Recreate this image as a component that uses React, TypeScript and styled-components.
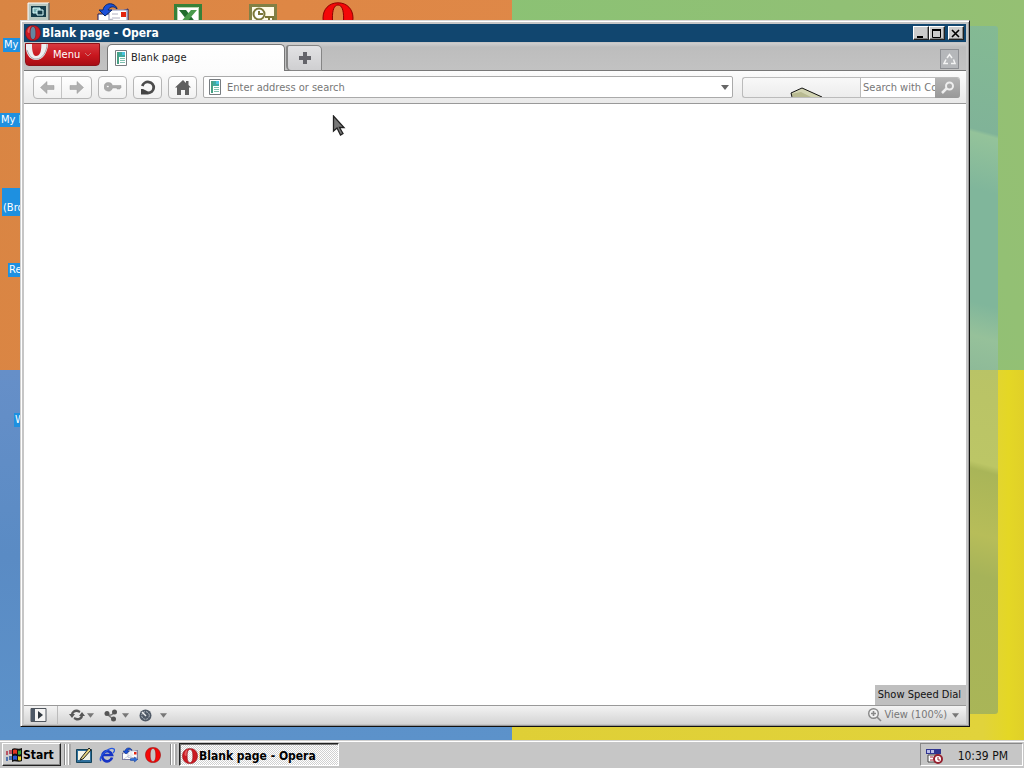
import React from "react";
import styled, { createGlobalStyle, css } from "styled-components";

const Global = createGlobalStyle`
  * { box-sizing: border-box; }
  body { margin: 0; font-family: "DejaVu Sans Condensed", "DejaVu Sans", sans-serif; font-size: 11px; line-height: 14px; color: #222; }
  button, input { font: inherit; color: inherit; margin: 0; padding: 0; border-radius: 0; }
  svg { display: block; flex: none; }
`;

const Screen = styled.div`
  display: flex;
  flex-direction: column;
  height: 100vh;
  min-height: 400px;
  overflow: hidden;
`;

const Desktop = styled.main`
  position: relative;
  flex: 1;
  min-height: 0;
  overflow: hidden;
`;

const Wallpaper = styled.div`
  display: grid;
  grid-template: 1fr 1fr / 1fr 1fr;
  height: 100%;
`;

const Quarter = styled.div<{ $fill: string }>`
  background: ${(p) => p.$fill};
`;

const WallpaperPane = styled.div`
  position: absolute;
  top: 26px;
  right: 26px;
  bottom: 26px;
  width: 120px;
  border-radius: 3px;
  display: grid;
  grid-template-rows: 344fr 344fr;
  overflow: hidden;
`;

const Shortcuts = styled.div`
  position: absolute;
  top: 2px;
  left: 0;
  display: flex;
`;

const Shortcut = styled.div`
  width: 75px;
  height: 32px;
  display: flex;
  justify-content: center;
`;

const Labels = styled.div`
  position: absolute;
  top: 38px;
  left: 0;
  width: 21px;
  overflow: hidden;
  display: grid;
  grid-template-rows: 75px 75px 75px 150px 20px;
  color: #fff;
  white-space: nowrap;
`;

const Label = styled.span<{ $indent: number; $tall?: boolean }>`
  margin-left: ${(p) => p.$indent}px;
  height: ${(p) => (p.$tall ? 28 : 14)}px;
  padding: ${(p) => (p.$tall ? "13px" : "0")} 1px 0;
  background: #1e90e0;
`;

const Window = styled.section`
  position: absolute;
  inset: 20px 54px 13px 20px;
  display: flex;
  flex-direction: column;
  padding: 2px;
  background: #c6c6c6;
  border: 1px solid;
  border-color: #d8d8d8 #111 #111 #d0d0d0;
  box-shadow: inset 1px 1px #fff, inset -1px -1px #999;
`;

const TitleBar = styled.header`
  display: flex;
  align-items: center;
  gap: 1px;
  height: 18px;
  margin: 1px 1px 1px 1px;
  padding: 0 2px 0 1px;
  background: #11466f;
  color: #fff;
`;

const Title = styled.h1`
  flex: 1;
  margin: 0;
  font-size: 12px;
  line-height: 18px;
  font-weight: bold;
`;

const raised = css`
  background: #ccc;
  border: 1px solid;
  border-color: #fff #222 #222 #fff;
  box-shadow: inset -1px -1px #888;
`;

const Caption = styled.button<{ $gap?: boolean }>`
  ${raised}
  width: 16px;
  height: 14px;
  margin-left: ${(p) => (p.$gap ? 2 : -1)}px;
  display: grid;
  place-items: center;
  color: #000;
`;

const TabBar = styled.nav`
  display: flex;
  align-items: flex-start;
  height: 28px;
  margin: 0 1px;
  border-bottom: 1px solid #777;
  background: linear-gradient(#cfcfcf, #bdbdbd 4px, #c2c2c2);
`;

const MenuButton = styled.button`
  display: flex;
  align-items: center;
  gap: 4px;
  width: 75px;
  height: 23px;
  margin: 0 7px 0 1px;
  padding: 0 5px 0 0;
  border: 1px solid #8e1118;
  border-radius: 0 0 4px 4px;
  background: linear-gradient(#d73a40, #c8161e 55%, #a80d14);
  color: #fff;
  overflow: hidden;
`;

const Tab = styled.button`
  display: flex;
  align-items: center;
  gap: 4px;
  width: 178px;
  height: 27px;
  margin-top: 1px;
  padding: 0 7px;
  border: 1px solid #777;
  border-bottom: 0;
  border-radius: 5px 5px 0 0;
  background: linear-gradient(#fff, #fcfcfc);
  color: #222;
`;

const NewTab = styled.button`
  display: grid;
  place-items: center;
  width: 36px;
  height: 26px;
  margin: 2px 0 0 1px;
  border: 1px solid #858585;
  border-left-width: 2px;
  border-radius: 3px 5px 0 5px;
  background: linear-gradient(#e2e2e4, #cfcfd1);
`;

const ClosedTabs = styled.button`
  display: grid;
  place-items: center;
  width: 19px;
  height: 20px;
  margin: 6px 7px 0 auto;
  border: 1px solid #8d8f93;
  background: #b5b7ba;
`;

const ToolBar = styled.div`
  display: flex;
  align-items: center;
  gap: 6px;
  height: 33px;
  margin: 0 1px;
  padding: 0 6px 0 9px;
  border-bottom: 1px solid #999;
  background: linear-gradient(#fcfcfc, #e9e9e9);
`;

const ButtonGroup = styled.div`
  display: flex;
  height: 23px;
  border: 1px solid #b6b6b6;
  border-radius: 4px;
  background: linear-gradient(#fff, #f1f1f1);
`;

const ToolButton = styled.button`
  display: grid;
  place-items: center;
  width: 27px;
  border: 0;
  background: none;
  & + & { width: 30px; border-left: 1px solid #c4c4c4; }
`;

const Address = styled.div`
  display: flex;
  align-items: center;
  flex: 1;
  gap: 6px;
  height: 22px;
  padding: 0 3px 0 5px;
  border: 1px solid #aaa;
  border-radius: 2px;
  background: #fff;
`;

const Field = styled.input`
  flex: 1;
  min-width: 0;
  height: 20px;
  border: 0;
  outline: 0;
  background: #fff;
  color: #777;
  &::placeholder { color: #777; opacity: 1; }
`;

const PlainButton = styled.button`
  display: flex;
  align-items: center;
  border: 0;
  background: none;
`;

const Search = styled.div`
  display: flex;
  width: 218px;
  height: 21px;
  margin-left: 3px;
  border: 1px solid #bbb;
  border-right: 0;
  border-radius: 3px;
`;

const Provider = styled.div`
  display: flex;
  align-items: flex-end;
  justify-content: center;
  width: 118px;
  padding-left: 9px;
  border-right: 1px solid #bbb;
`;

const SearchField = styled(Field)`
  height: 19px;
  padding-left: 2px;
`;

const SearchButton = styled.button`
  display: grid;
  place-items: center;
  width: 25px;
  height: 20px;
  border: 0;
  border-radius: 0 3px 3px 0;
  background: linear-gradient(#b4b4b4, #989898);
`;

const Page = styled.article`
  display: flex;
  align-items: flex-end;
  justify-content: flex-end;
  flex: 1;
  min-height: 0;
  margin: 0 1px;
  background: #fff;
`;

const Hint = styled.div`
  height: 20px;
  padding: 3px 5px 3px 3px;
  background: #bfbfbf;
  color: #111;
`;

const StatusBar = styled.footer`
  display: flex;
  align-items: center;
  height: 19px;
  margin: 0 1px;
  padding: 0 7px 0 6px;
  border-top: 1px solid #999;
  background: linear-gradient(#f3f3f3, #d4d4d4);
`;

const PanelToggle = styled.div`
  display: flex;
  align-items: center;
  height: 100%;
  width: 28px;
  margin-right: 11px;
  border-right: 1px solid #bbb;
`;

const StatusButton = styled(PlainButton)`
  gap: 2px;
  margin-right: 10px;
`;

const ViewButton = styled(PlainButton)`
  gap: 2px;
  margin-left: auto;
  color: #777;
  & > svg:last-child { margin-left: 3px; }
`;

const TaskBar = styled.footer`
  display: flex;
  align-items: center;
  flex: none;
  height: 28px;
  padding: 0 1px 0 2px;
  border-top: 1px solid #d0d0d0;
  box-shadow: inset 0 1px #fff;
  background: #c6c6c6;
`;

const Start = styled.button`
  ${raised}
  display: flex;
  align-items: center;
  width: 59px;
  height: 23px;
  padding-left: 3px;
  font-size: 12px;
  font-weight: bold;
  color: #000;
`;

const Grip = styled.div`
  width: 7px;
  height: 21px;
  margin: 0 2px 0 3px;
  border-left: 1px solid #888;
  border-right: 2px solid #aaa;
  box-shadow: inset 1px 0 #fff, inset -1px 0 #fff;
`;

const QuickLaunch = styled.div`
  display: flex;
  gap: 7px;
  margin: 0 6px 0 3px;
`;

const Task = styled.button`
  display: flex;
  align-items: center;
  gap: 1px;
  width: 160px;
  height: 23px;
  padding: 2px 3px 0 2px;
  border: 1px solid;
  border-color: #222 #fff #fff #222;
  box-shadow: inset 1px 1px #777;
  background: repeating-conic-gradient(#fff 0 25%, #d0d0d0 0 50%) 0 0 / 2px 2px;
  font-size: 12px;
  font-weight: bold;
  color: #000;
`;

const Tray = styled.div`
  display: flex;
  align-items: center;
  justify-content: space-between;
  width: 103px;
  height: 23px;
  margin-left: auto;
  padding: 2px 14px 0 4px;
  border: 1px solid;
  border-color: #888 #fff #fff #888;
  font-size: 12px;
  color: #111;
`;

const Pointer = styled.svg`
  position: absolute;
  left: 332px;
  top: 115px;
`;

function OperaIcon({ size = 16, flat = false }: { size?: number; flat?: boolean }) {
  return (
    <svg width={size} height={size} viewBox="0 0 16 16">
      {!flat && <ellipse cx="8" cy="8" rx="3.500" ry="6.800" fill="#fff" opacity=".35" />}
      <path fillRule="evenodd" fill={flat ? "#f40808" : "#cc1a22"} stroke={flat ? "#8d0000" : "#7c0c12"} strokeWidth="0.5" d="M8 .4C3.400.4.5 3.700.5 8s2.900 7.600 7.500 7.600 7.500-3.300 7.500-7.600S12.600.4 8 .4ZM8 1.500c2 0 2.800 2.700 2.800 6.500S10 14.500 8 14.500 5.200 11.800 5.200 8 6 1.500 8 1.500Z" />
      {!flat && <path d="M3 4c1-2 2-2.500 3-2.700C4.600 3 4.500 6 4.500 8 3 8 1.800 7 3 4Z" fill="#ef7a7c" opacity=".7" />}
    </svg>
  );
}

function PageIcon() {
  return (
    <svg width="12" height="16" viewBox="0 0 12 16">
      <path d="M.5.5h11v15H.5z" fill="#fff" stroke="#777c80" />
      <path d="M2 2h2v12H2z" fill="#489f83" />
      <path d="M4 2h6v5H4z" fill="#3eaaa0" />
      <path d="M7 2h3v3H7z" fill="#4cc3e0" />
      <path d="M5 8.500h5M5 10.500h5M5 12.500h5" stroke="#7dbfaf" />
    </svg>
  );
}

function Caret({ color = "#666", size = 8 }: { color?: string; size?: number }) {
  return (
    <svg width={size} height="5" viewBox="0 0 8 5"><path d="M0 0h8L4 5Z" fill={color} /></svg>
  );
}

function Arrow({ flip = false }: { flip?: boolean }) {
  return (
    <svg width="15" height="13" viewBox="0 0 15 13">
      <path transform={flip ? "matrix(-1 0 0 1 15 0)" : undefined} d="M.5 6.500 7 .5V4.500h7v4H7v4Z" fill="#b0b0b0" stroke="#999" strokeWidth=".5" />
    </svg>
  );
}

function OutlookExpress({ size }: { size: number }) {
  return (
    <svg width={size} height={size} viewBox="0 0 32 32">
      <path d="M1 12h14l16-5v18H1Z" fill="#fff" stroke="#17175c" />
      <path d="M12 8h18v13H12Z" fill="#fff" stroke="#8890b8" />
      <path d="M24 10h5v5h-5Z" fill="#e32510" />
      <path d="M15 12h6M15 16h8" stroke="#b0b0c0" />
      <path d="M2 8h4c1-5 5-7 9-6 3 1 5 3 5 5-3-3-7-3-9 1h4L8 14Z" fill="#1b50d8" stroke="#08266e" />
      <path d="m2 25 12-8 14 8" fill="none" stroke="#a7a7b5" />
      <path d="M17 27h8v3l6-5-6-5v3h-8Z" fill="#2b6fe0" stroke="#123b96" />
    </svg>
  );
}

export default function App() {
  return (
    <>
      <Global />
      <Screen>
        <Desktop>
          <Wallpaper>
            <Quarter $fill="linear-gradient(100deg, #d98543, #de8745 50%, #df8848)" />
            <Quarter $fill="linear-gradient(75deg, #8ac274, #91c075 70%, #95c073)" />
            <Quarter $fill="linear-gradient(#668fc8, #5a8bc4 50%, #5c92ca)" />
            <Quarter $fill="linear-gradient(90deg, #dfcf36, #e1d33b 92%, #e4d725 97%, #e0d029)" />
          </Wallpaper>
          <WallpaperPane>
            <Quarter $fill="linear-gradient(195deg, #84ba93 0, #80b398 29%, #94c39a 30%, #80b69b 45%, #80b69b 75%, #96c19a 84%, #88b597)" />
            <Quarter $fill="linear-gradient(195deg, #b9c366 0, #bcc666 26%, #a9b558 28%, #b7bd59 45%, #a6b359 56%, #aab657)" />
          </WallpaperPane>
          <Shortcuts>
            <Shortcut>
              <svg width="32" height="32" viewBox="0 0 32 32">
                <path d="M6 1h21v18H6Z" fill="#b9c7bf" stroke="#fff" />
                <path d="M27 1v18H6" fill="none" stroke="#222" />
                <path d="M9 4h15v11H9Z" fill="#153c49" />
                <path d="M11 6h7v5h-7Z" fill="#7fb4b6" stroke="#dff" />
                <path d="M15 8h6v5h-6Z" fill="#153c49" stroke="#dff" />
              </svg>
            </Shortcut>
            <Shortcut><OutlookExpress size={32} /></Shortcut>
            <Shortcut>
              <svg width="32" height="32" viewBox="0 0 32 32">
                <path d="M3.500 3.500h25v25h-25Z" fill="#fff" stroke="#378139" strokeWidth="3" />
                <path d="M5.500 5.500h21v21h-21Z" fill="none" stroke="#b9d6b1" />
                <path d="M7 8h7l11 14h-7Z" fill="#216c2e" />
                <path d="M25 8h-6L7 22h6Z" fill="#4a9a4b" />
              </svg>
            </Shortcut>
            <Shortcut>
              <svg width="32" height="32" viewBox="0 0 32 32">
                <path d="M3.500 3.500h25v25h-25Z" fill="#fffbe8" stroke="#818045" strokeWidth="3" />
                <circle cx="12" cy="12" r="5.500" fill="#fff" stroke="#7b7637" strokeWidth="2" />
                <path d="M12 9v3h4M18 15h8v7M22 15v6" fill="none" stroke="#7b7637" strokeWidth="2" />
              </svg>
            </Shortcut>
            <Shortcut><OperaIcon size={32} flat /></Shortcut>
          </Shortcuts>
          <Labels>
            <Label $indent={3}>My</Label>
            <Label $indent={0}>My D</Label>
            <Label $indent={2} $tall>(Bro</Label>
            <Label $indent={8}>Re</Label>
            <Label $indent={14}>W</Label>
          </Labels>

          <Window>
            <TitleBar>
              <OperaIcon />
              <Title>Blank page - Opera</Title>
              <Caption aria-label="Minimize">
                <svg width="10" height="9"><path d="M1 7h6v2H1Z" /></svg>
              </Caption>
              <Caption aria-label="Maximize">
                <svg width="10" height="9"><path d="M.5 1h8v7.500h-8Z" fill="none" stroke="#000" /><path d="M0 0h9v2H0Z" /></svg>
              </Caption>
              <Caption aria-label="Close" $gap>
                <svg width="10" height="9"><path d="m1 1 7 7M8 1 1 8" stroke="#000" strokeWidth="1.600" /></svg>
              </Caption>
            </TitleBar>

            <TabBar>
              <MenuButton>
                <svg width="23" height="21" viewBox="0 0 23 21">
                  <path fillRule="evenodd" d="M0-7C2-10 20-10 22-4 23 6 18 16 10 16 5 16 1 12 0 5ZM7-6C5 1 6 12 10 12c5 0 6-7 5-18Z" fill="#eeeef1" />
                  <path d="M1 6c2 6 5 9 9 9 7 0 11-8 11-15" fill="none" stroke="#aaa6ac" />
                </svg>
                <span>Menu</span>
                <svg width="8" height="5" viewBox="0 0 8 5"><path d="m1 1 3 3 3-3" fill="none" stroke="#c77" /></svg>
              </MenuButton>
              <Tab><PageIcon />Blank page</Tab>
              <NewTab aria-label="New tab">
                <svg width="12" height="12"><path d="M4 0h4v4h4v4H8v4H4V8H0V4h4Z" fill="#64646a" /></svg>
              </NewTab>
              <ClosedTabs aria-label="Closed tabs">
                <svg width="13" height="13" viewBox="0 0 13 13"><path d="M4 5 6.500 1.500 9 5M10.500 6.500l1.500 4H8M5 10.500H1l2-4" fill="none" stroke="#f4f4f4" strokeWidth="1.500" /></svg>
              </ClosedTabs>
            </TabBar>

            <ToolBar>
              <ButtonGroup>
                <ToolButton aria-label="Back"><Arrow /></ToolButton>
                <ToolButton aria-label="Forward"><Arrow flip /></ToolButton>
              </ButtonGroup>
              <ButtonGroup>
                <ToolButton aria-label="Password">
                  <svg width="18" height="10" viewBox="0 0 18 10"><path fillRule="evenodd" d="M4.500.5a4 4 0 0 1 4 3H17V6h-1v1h-3V6H8.500A4.300 4.300 0 1 1 4.500.5ZM2.500 3.500v2h2.500v-2Z" fill="#aaa" stroke="#999" strokeWidth=".5" /></svg>
                </ToolButton>
              </ButtonGroup>
              <ButtonGroup>
                <ToolButton aria-label="Reload">
                  <svg width="16" height="15" viewBox="0 0 16 15"><path d="M2.300 6A5.800 5.500 0 1 1 8 13" fill="none" stroke="#4d4d4d" strokeWidth="2.800" /><path d="M1 14.500V9h2l5 2.500v3Z" fill="#444" /></svg>
                </ToolButton>
              </ButtonGroup>
              <ButtonGroup>
                <ToolButton aria-label="Home">
                  <svg width="16" height="15" viewBox="0 0 16 15"><path d="M8 0 0 7.500h2V15h4v-5h4v5h4V7.500h2L13.500 5V1h-2.500v2Z" fill="#606060" /></svg>
                </ToolButton>
              </ButtonGroup>
              <Address>
                <PageIcon />
                <Field aria-label="Address" placeholder="Enter address or search" />
                <PlainButton aria-label="Show addresses"><Caret /></PlainButton>
              </Address>
              <Search>
                <Provider>
                  <svg width="33" height="10" viewBox="0 0 33 10"><path d="m1 6 12-5 19 9H3Z" fill="#d2d4b2" /><path d="m11 5 10 5H3L1 7Z" fill="#b8ba91" /><path d="M2 10 1 6 12 1l20 9" fill="none" stroke="#111" /></svg>
                </Provider>
                <SearchField aria-label="Web search" placeholder="Search with Comcast" />
                <SearchButton aria-label="Search">
                  <svg width="14" height="14" viewBox="0 0 14 14"><circle cx="8.500" cy="5" r="3.500" fill="none" stroke="#eee" strokeWidth="2" /><path d="m1 12 5-5" stroke="#eee" strokeWidth="2.500" /></svg>
                </SearchButton>
              </Search>
            </ToolBar>

            <Page><Hint>Show Speed Dial</Hint></Page>

            <StatusBar>
              <PanelToggle>
                <PlainButton aria-label="Panels">
                  <svg width="17" height="14"><path d="M1 .5h15v13H1Z" fill="#f4f4f4" stroke="#4f555d" /><path d="M1 1h4v12H1Z" fill="#4d5866" /><path d="m8 3 5 4-5 4Z" fill="#303840" /></svg>
                </PlainButton>
              </PanelToggle>
              <StatusButton aria-label="Synchronize">
                <svg width="16" height="12" viewBox="0 0 16 12"><path d="M3 6c0-3 3-5 6-4l2 1M13 6c0 3-3 5-6 4L5 9" fill="none" stroke="#555" strokeWidth="2.400" /><path d="M0 5h6L3 9ZM10 7h6l-3-4Z" fill="#555" /></svg>
                <Caret size={7} color="#777" />
              </StatusButton>
              <StatusButton aria-label="Unite">
                <svg width="16" height="13" viewBox="0 0 16 13"><path d="M3 4c1 3 4 3 7 0M4 6l5 4" fill="none" stroke="#777" strokeWidth="1.500" /><circle cx="3" cy="4.500" r="2.500" fill="#555" /><circle cx="10.500" cy="3" r="2.500" fill="#555" /><circle cx="9.500" cy="10" r="2.500" fill="#555" /></svg>
                <Caret size={7} color="#777" />
              </StatusButton>
              <StatusButton aria-label="Turbo">
                <svg width="19" height="13" viewBox="0 0 19 13"><circle cx="6.500" cy="6.500" r="6" fill="#4f5966" /><circle cx="6.500" cy="6.500" r="3.800" fill="none" stroke="#b8bec5" strokeDasharray="2 1" /><path d="m3 3 4 4" stroke="#eee" strokeWidth="1.500" /></svg>
                <Caret size={7} color="#777" />
              </StatusButton>
              <ViewButton>
                <svg width="14" height="14" viewBox="0 0 14 14"><circle cx="5.500" cy="5.500" r="4.800" fill="#f2f2f2" stroke="#888" strokeWidth="1.400" /><path d="M3 5.500h5M5.500 3v5M9 9l4 4" stroke="#888" strokeWidth="1.600" /></svg>
                View (100%)
                <Caret size={7} color="#777" />
              </ViewButton>
            </StatusBar>
          </Window>

          <Pointer width="14" height="22" viewBox="0 0 14 22">
            <path d="M1.500 1v15l3.500-3 3.500 7 2.500-1.500-3.500-6H12Z" fill="#777" stroke="#222" strokeWidth="1.300" />
          </Pointer>
        </Desktop>

        <TaskBar>
          <Start>
            <svg width="17" height="16" viewBox="0 0 17 16">
              <path d="M6 2c3-2 6 1 10-1v13c-4 2-7-1-10 1Z" fill="#111" />
              <path d="M7 3q2-1 4 0v4q-2-1-4 0Z" fill="#e33420" /><path d="M12 3.500q2 .5 3-.5v4q-1 1-3 .5Z" fill="#35a33c" />
              <path d="M7 9q2-1 4 0v4q-2-1-4 0Z" fill="#2857d4" /><path d="M12 9q2 1 3 0v4q-1 1-3 0Z" fill="#e8cc25" />
              <path d="M0 5h2m1-1h3M0 7h2m1-1h3" stroke="#b02d42" strokeWidth="1.500" /><path d="M0 11h2m1-1h3M0 13h2m1-1h3" stroke="#2857a4" strokeWidth="1.500" />
            </svg>
            Start
          </Start>
          <Grip />
          <QuickLaunch>
            <PlainButton aria-label="Show desktop">
              <svg width="16" height="16" viewBox="0 0 16 16"><path d="M.5 2.500h15v13H.5Z" fill="#2f6f9c" stroke="#13435b" /><path d="M2 4h12v9H2Z" fill="#f3f4e9" /><path d="m5 11 8-10 2 2-8 9-3 1Z" fill="#e6d57d" stroke="#222" /></svg>
            </PlainButton>
            <PlainButton aria-label="Internet Explorer">
              <svg width="16" height="16" viewBox="0 0 16 16"><path d="M13 10.500A5 5 0 1 1 13 8H4" fill="none" stroke="#1633c4" strokeWidth="2.700" /><path d="M2 14C-2 10 11-1 15 2c1 1 0 3-1 4" fill="none" stroke="#2758df" strokeWidth="1.300" /></svg>
            </PlainButton>
            <PlainButton aria-label="Outlook Express"><OutlookExpress size={16} /></PlainButton>
            <PlainButton aria-label="Opera"><OperaIcon flat /></PlainButton>
          </QuickLaunch>
          <Grip />
          <Task><OperaIcon />Blank page - Opera</Task>
          <Tray>
            <svg width="18" height="16" viewBox="0 0 18 16">
              <path d="M1 1h15v5H1Z" fill="#303590" /><path d="M2 2h3v3H2ZM6 2h3v3H6Z" fill="#b9bce8" />
              <path d="M3 7h10v7H3Z" fill="#fff" stroke="#444" /><path d="M5 9h3M5 12h3" stroke="#a42334" />
              <circle cx="13" cy="11" r="4" fill="#fff" stroke="#95202e" strokeWidth="2" /><path d="M13 9v3h2" fill="none" stroke="#95202e" />
            </svg>
            <time>10:39 PM</time>
          </Tray>
        </TaskBar>
      </Screen>
    </>
  );
}
